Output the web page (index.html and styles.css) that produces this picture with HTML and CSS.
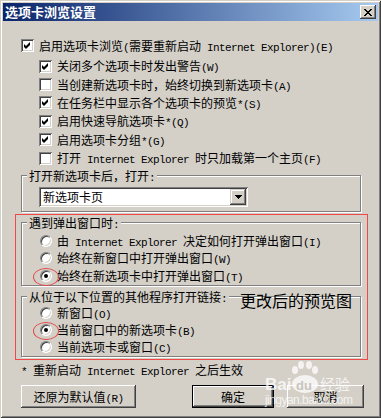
FILE: index.html
```html
<!DOCTYPE html>
<html lang="zh-CN">
<head>
    <meta charset="UTF-8">
    <title>选项卡浏览设置</title>
    <link rel="stylesheet" href="styles.css">
</head>
<body>
    <div class="window">
        <div class="titlebar">
            <span class="title">选项卡浏览设置</span>
            <button class="close">
                <svg width="8" height="7" viewBox="0 0 8 7" shape-rendering="crispEdges">
                    <path d="M0 0h2v1H0zM6 0h2v1H6zM1 1h2v1H1zM5 1h2v1H5zM2 2h4v1H2zM3 3h2v1H3zM2 4h4v1H2zM1 5h2v1H1zM5 5h2v1H5zM0 6h2v1H0zM6 6h2v1H6z" fill="#000"/>
                </svg>
            </button>
        </div>

        <div class="content">
            <div class="row main">
                <span class="check on"><svg width="13" height="13" viewBox="0 0 13 13"><path d="M3 5L5 7L9 3L9 6L5 10L3 8Z" fill="#000"/></svg></span>
                <span>启用选项卡浏览<span class="en">(</span>需要重新启动<span class="en"> Internet Explorer)(E)</span></span>
            </div>

            <div class="sub">
                <div class="row">
                    <span class="check on"><svg width="13" height="13" viewBox="0 0 13 13"><path d="M3 5L5 7L9 3L9 6L5 10L3 8Z" fill="#000"/></svg></span>
                    <span>关闭多个选项卡时发出警告<span class="en">(W)</span></span>
                </div>
                <div class="row">
                    <span class="check"></span>
                    <span>当创建新选项卡时，始终切换到新选项卡<span class="en">(A)</span></span>
                </div>
                <div class="row">
                    <span class="check on"><svg width="13" height="13" viewBox="0 0 13 13"><path d="M3 5L5 7L9 3L9 6L5 10L3 8Z" fill="#000"/></svg></span>
                    <span>在任务栏中显示各个选项卡的预览<span class="en">*(S)</span></span>
                </div>
                <div class="row">
                    <span class="check on"><svg width="13" height="13" viewBox="0 0 13 13"><path d="M3 5L5 7L9 3L9 6L5 10L3 8Z" fill="#000"/></svg></span>
                    <span>启用快速导航选项卡<span class="en">*(Q)</span></span>
                </div>
                <div class="row">
                    <span class="check on"><svg width="13" height="13" viewBox="0 0 13 13"><path d="M3 5L5 7L9 3L9 6L5 10L3 8Z" fill="#000"/></svg></span>
                    <span>启用选项卡分组<span class="en">*(G)</span></span>
                </div>
                <div class="row">
                    <span class="check"></span>
                    <span>打开<span class="en"> Internet Explorer </span>时只加载第一个主页<span class="en">(F)</span></span>
                </div>
            </div>

            <div class="group g1">
                <div class="group-title">打开新选项卡后，打开<span class="en">:</span></div>
                <div class="select">
                    <span class="select-value">新选项卡页</span>
                    <span class="select-btn">
                        <svg width="7" height="4" viewBox="0 0 7 4" shape-rendering="crispEdges"><path d="M0 0h7v1H0zM1 1h5v1H1zM2 2h3v1H2zM3 3h1v1H3z" fill="#000"/></svg>
                    </span>
                </div>
            </div>

            <div class="highlight">
                <div class="group g2">
                    <div class="group-title">遇到弹出窗口时<span class="en">:</span></div>
                    <div class="options">
                        <div class="row opt"><span class="radio"></span><span>由<span class="en"> Internet Explorer </span>决定如何打开弹出窗口<span class="en">(I)</span></span></div>
                        <div class="row opt"><span class="radio"></span><span>始终在新窗口中打开弹出窗口<span class="en">(W)</span></span></div>
                        <div class="row opt"><span class="radio on marked"></span><span>始终在新选项卡中打开弹出窗口<span class="en">(T)</span></span></div>
                    </div>
                </div>
                <div class="group g3">
                    <div class="group-title">从位于以下位置的其他程序打开链接<span class="en">:</span></div>
                    <div class="options">
                        <div class="row opt"><span class="radio"></span><span>新窗口<span class="en">(O)</span></span></div>
                        <div class="row opt"><span class="radio on marked"></span><span>当前窗口中的新选项卡<span class="en">(B)</span></span></div>
                        <div class="row opt"><span class="radio"></span><span>当前选项卡或窗口<span class="en">(C)</span></span></div>
                    </div>
                </div>
            </div>

            <div class="note"><span class="en">* </span>重新启动<span class="en"> Internet Explorer </span>之后生效</div>

            <div class="buttons">
                <button class="btn reset">还原为默认值<span class="en">(R)</span></button>
                <button class="btn ok">确定</button>
                <button class="btn cancel">取消</button>
            </div>
        </div>

        <div class="annotation">更改后的预览图</div>

        <svg class="watermark" width="95" height="48" viewBox="0 0 95 48">
            <text x="3" y="30" class="wm-bai">Bai</text>
            <ellipse cx="33" cy="10" rx="3" ry="4"/>
            <ellipse cx="39" cy="5" rx="3" ry="4"/>
            <ellipse cx="47" cy="5" rx="3" ry="4"/>
            <ellipse cx="53" cy="10" rx="3" ry="4"/>
            <ellipse cx="43" cy="24" rx="13" ry="9"/>
            <text x="34" y="30" class="wm-du">du</text>
            <text x="58" y="30" class="wm-jy">经验</text>
            <text x="3" y="44" class="wm-url" textLength="88">jingyan.baidu.com</text>
        </svg>
    </div>
</body>
</html>
```

FILE: styles.css
```css
* {
    margin: 0;
    padding: 0;
    box-sizing: border-box;
}

body {
    background: #d4d0c8;
    font-family: "Noto Sans CJK SC", sans-serif;
    font-size: 12px;
    color: #000;
}

.en {
    font-family: "Liberation Mono", monospace;
    font-size: 11px;
    line-height: 10px;
    letter-spacing: -0.6px;
}

.window {
    position: relative;
    width: 381px;
    height: 418px;
    padding: 3px;
    background: #d4d0c8;
    box-shadow: inset 1px 1px #d4d0c8, inset -1px -1px #404040, inset 2px 2px #fff, inset -2px -2px #808080;
    overflow: hidden;
}

/* barre de titre */
.titlebar {
    height: 18px;
    display: flex;
    align-items: center;
    justify-content: space-between;
    padding: 0 2px;
    background: linear-gradient(to right, #0a246a, #a6caf0);
}

.title {
    color: #fff;
    font-weight: bold;
    font-size: 13px;
    line-height: 18px;
}

.close {
    width: 16px;
    height: 14px;
    border: none;
    background: #d4d0c8;
    display: flex;
    align-items: center;
    justify-content: center;
    box-shadow: inset -1px -1px #404040, inset 1px 1px #fff, inset -2px -2px #808080, inset 2px 2px #d4d0c8;
}

.content {
    padding: 15px 17px 0 18px;
}

.row {
    display: flex;
    align-items: center;
    gap: 5px;
    height: 18.4px;
    white-space: nowrap;
    line-height: 16px;
}

.row.main {
    height: 19px;
}

.sub {
    padding-left: 18px;
    margin-top: 2px;
}

.check {
    flex: none;
    width: 13px;
    height: 13px;
    background: #fff;
    box-shadow: inset 1px 1px #808080, inset -1px -1px #fff, inset 2px 2px #404040, inset -2px -2px #d4d0c8;
}

.check svg {
    display: block;
}

/* cadres */
.group {
    border: 1px solid #808080;
    box-shadow: inset 1px 1px #fff, 1px 1px #fff;
}

.group-title {
    width: fit-content;
    height: 15px;
    margin: -8px 0 0 5px;
    padding: 0 2px;
    background: #d4d0c8;
    line-height: 15px;
    white-space: nowrap;
}

.g1 {
    margin-top: 7.6px;
}

.select {
    margin: 4px 0 4px 17px;
    width: 209px;
    height: 20px;
    padding: 2px;
    display: flex;
    align-items: center;
    justify-content: space-between;
    background: #fff;
    box-shadow: inset 1px 1px #808080, inset -1px -1px #fff, inset 2px 2px #404040, inset -2px -2px #d4d0c8;
}

.select-value {
    padding-left: 2px;
    line-height: 16px;
}

.select-btn {
    width: 16px;
    height: 16px;
    display: flex;
    align-items: center;
    justify-content: center;
    background: #d4d0c8;
    box-shadow: inset -1px -1px #404040, inset 1px 1px #d4d0c8, inset -2px -2px #808080, inset 2px 2px #fff;
}

.highlight {
    margin: 2px -7px 0 -6px;
    padding: 0 6px 2px 5px;
    border: 1px solid #f04848;
}

.g2 {
    margin-top: 7px;
}

.g2 .options {
    padding: 2px 0 0.5px 18px;
}

.g2 .opt {
    height: 17.5px;
}

.g3 {
    margin-top: 10px;
}

.g3 .options {
    padding-left: 18px;
}

.g3 .opt {
    height: 17.3px;
}

.radio {
    position: relative;
    flex: none;
    width: 12px;
    height: 12px;
    border-radius: 50%;
    background: #fff;
    border: 1px solid;
    border-color: #808080 #fff #fff #808080;
    box-shadow: inset 1px 1px #404040, inset -1px -1px #d4d0c8;
}

.radio.on::before {
    content: "";
    position: absolute;
    left: 3px;
    top: 3px;
    width: 4px;
    height: 4px;
    border-radius: 50%;
    background: #000;
}

.radio.marked::after {
    content: "";
    position: absolute;
    left: -8px;
    top: -3px;
    width: 24px;
    height: 16px;
    border: 1px solid #e04848;
    border-radius: 50%;
}

.note {
    margin-top: 1px;
    height: 18px;
    line-height: 18px;
    white-space: nowrap;
}

.buttons {
    display: flex;
    margin: 6px -3px 0 0;
}

.btn {
    height: 23px;
    border: none;
    background: #d4d0c8;
    font-family: inherit;
    font-size: 12px;
    color: #000;
    box-shadow: inset -1px -1px #404040, inset 1px 1px #fff, inset -2px -2px #808080, inset 2px 2px #d4d0c8;
}

.btn.reset {
    width: 115px;
}

.btn.ok {
    width: 82px;
    margin-left: auto;
    margin-right: 13px;
    box-shadow: inset 0 0 0 1px #000, inset -2px -2px #404040, inset 2px 2px #fff, inset -3px -3px #808080;
}

.btn.cancel {
    width: 77px;
}

/* annotations par-dessus la capture */
.annotation {
    position: absolute;
    left: 240px;
    top: 292px;
    font-size: 16px;
    line-height: 16px;
    white-space: nowrap;
}

.watermark {
    position: absolute;
    left: 262px;
    top: 360px;
    fill: rgba(255, 255, 255, 0.75);
}

.wm-bai {
    font-family: "Liberation Sans", sans-serif;
    font-weight: bold;
    font-size: 17px;
}

.wm-du {
    font-family: "Liberation Sans", sans-serif;
    font-weight: bold;
    font-size: 13px;
    fill: #c8c4bc;
}

.wm-jy {
    font-family: "Noto Sans CJK SC", sans-serif;
    font-size: 15px;
}

.wm-url {
    font-family: "Liberation Sans", sans-serif;
    font-size: 12px;
}
```
